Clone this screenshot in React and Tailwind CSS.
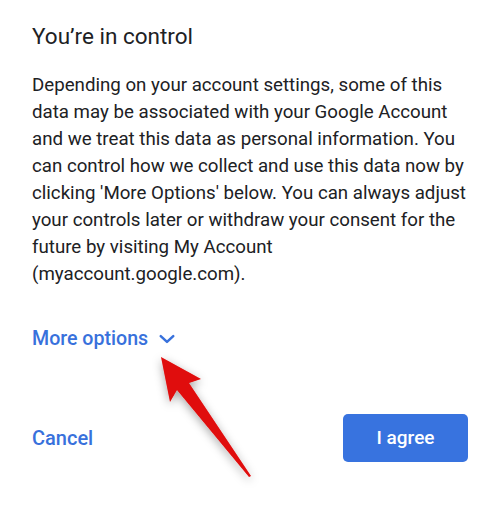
import React from 'react'

const Arrow = () => (
  <svg className="absolute left-0 top-0 pointer-events-none" width="500" height="508" viewBox="0 0 500 508">
    <defs>
      <filter id="sh" x="-50%" y="-50%" width="200%" height="200%">
        <feDropShadow dx="0" dy="3" stdDeviation="5" floodColor="#000" floodOpacity="0.35" />
      </filter>
    </defs>
    <path
      d="M161 357 L201 379 L189 383 L251 476 L249 477 L177 390 L170 402 Z"
      fill="#e00808"
      filter="url(#sh)"
    />
  </svg>
)

export default function App() {
  return (
    <div className="relative w-[500px] h-[508px] bg-white overflow-hidden" style={{ fontFamily: 'Roboto, "Liberation Sans", sans-serif' }}>
      <div className="pl-8 pr-[30px] pt-[20px]">
        <h1 className="text-[22.5px] leading-[32px] text-[#202124]">You’re in control</h1>
        <p className="mt-[20px] text-[18.7px] leading-[27px] text-[#202124]">
          Depending on your account settings, some of this data may be associated with your Google Account and we treat this data as personal information. You can control how we collect and use this data now by clicking 'More Options' below. You can always adjust your controls later or withdraw your consent for the future by visiting My Account (myaccount.google.com).
        </p>
        <button className="mt-[36px] flex items-center gap-[9px] text-[#3871dc] text-[19.6px] font-medium">
          More options
          <svg width="20" height="20" viewBox="0 0 24 24" fill="none" stroke="#3871dc" strokeWidth="3" strokeLinecap="round" strokeLinejoin="round">
            <path d="M4.5 8.5 L12 15.5 L19.5 8.5" />
          </svg>
        </button>
        <div className="mt-[61px] flex items-center justify-between pr-[2px]">
          <button className="text-[#3871dc] text-[20px] font-medium">Cancel</button>
          <button className="w-[125px] h-[48px] rounded-[5px] bg-[#3873df] text-white text-[19px] font-medium">I agree</button>
        </div>
      </div>
      <Arrow />
    </div>
  )
}
